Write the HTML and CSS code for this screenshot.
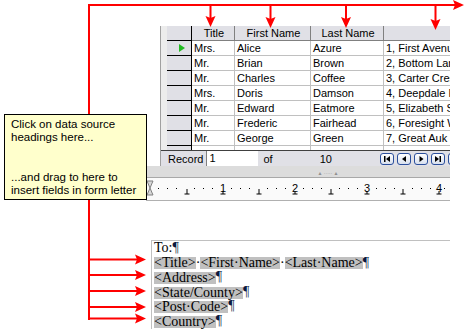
FILE: index.html
```html
<!DOCTYPE html>
<html>
<head>
  <title>Mail merge fields</title>
  <link rel="stylesheet" href="styles.css">
</head>
<body>
<div class="figure">

  <div class="app">
    <!-- Data source browser -->
    <div class="datasource">
      <div class="grid">
        <div class="row head">
          <div class="cell rowhead"></div>
          <div class="cell">Title</div>
          <div class="cell">First Name</div>
          <div class="cell">Last Name</div>
          <div class="cell"></div>
        </div>
        <div class="row">
          <div class="cell rowhead"><span class="current"></span></div>
          <div class="cell">Mrs.</div><div class="cell">Alice</div><div class="cell">Azure</div><div class="cell">1, First Avenue</div>
        </div>
        <div class="row">
          <div class="cell rowhead"></div>
          <div class="cell">Mr.</div><div class="cell">Brian</div><div class="cell">Brown</div><div class="cell">2, Bottom Lane</div>
        </div>
        <div class="row">
          <div class="cell rowhead"></div>
          <div class="cell">Mr.</div><div class="cell">Charles</div><div class="cell">Coffee</div><div class="cell">3, Carter Crescent</div>
        </div>
        <div class="row">
          <div class="cell rowhead"></div>
          <div class="cell">Mrs.</div><div class="cell">Doris</div><div class="cell">Damson</div><div class="cell">4, Deepdale Road</div>
        </div>
        <div class="row">
          <div class="cell rowhead"></div>
          <div class="cell">Mr.</div><div class="cell">Edward</div><div class="cell">Eatmore</div><div class="cell">5, Elizabeth Street</div>
        </div>
        <div class="row">
          <div class="cell rowhead"></div>
          <div class="cell">Mr.</div><div class="cell">Frederic</div><div class="cell">Fairhead</div><div class="cell">6, Foresight Way</div>
        </div>
        <div class="row">
          <div class="cell rowhead"></div>
          <div class="cell">Mr.</div><div class="cell">George</div><div class="cell">Green</div><div class="cell">7, Great Auk Lane</div>
        </div>
        <div class="row">
          <div class="cell rowhead"></div>
          <div class="cell"></div><div class="cell"></div><div class="cell"></div><div class="cell"></div>
        </div>
      </div>

      <div class="recordbar">
        <span class="label">Record</span>
        <span class="recfield">1</span>
        <span class="of">of</span>
        <span class="count">10</span>
        <div class="nav">
          <span class="navbtn"><svg width="12" height="10" viewBox="0 0 12 10"><rect x="3" y="2" width="1.5" height="6" fill="#000"/><polygon points="9,2 9,8 5,5" fill="#000"/></svg></span>
          <span class="navbtn"><svg width="12" height="10" viewBox="0 0 12 10"><polygon points="8,2 8,8 4,5" fill="#000"/></svg></span>
          <span class="navbtn"><svg width="12" height="10" viewBox="0 0 12 10"><polygon points="4.5,2 4.5,8 8.5,5" fill="#000"/></svg></span>
          <span class="navbtn"><svg width="12" height="10" viewBox="0 0 12 10"><polygon points="3,2 3,8 7,5" fill="#000"/><rect x="7.5" y="2" width="1.5" height="6" fill="#000"/></svg></span>
          <span class="navbtn"></span>
        </div>
      </div>
    </div>

    <div class="splitter"><span class="grip">&#9650; &middot;&middot;&middot;&middot;&middot; &#9650;</span></div>

    <!-- Ruler -->
    <div class="ruler">
      <svg width="304" height="22" viewBox="0 0 304 22">
        <polygon points="1,3 7,3 4,10 7,17 1,17 4,10" fill="#d8d8d8" stroke="#808080" stroke-width="1"/>
        <g fill="#000">
          <rect x="12" y="10" width="1" height="1"/><rect x="21" y="10" width="1" height="1"/><rect x="30" y="10" width="1" height="1"/>
          <rect x="48" y="10" width="1" height="1"/><rect x="57" y="10" width="1" height="1"/><rect x="66" y="10" width="1" height="1"/>
          <rect x="85" y="10" width="1" height="1"/><rect x="94" y="10" width="1" height="1"/><rect x="103" y="10" width="1" height="1"/>
          <rect x="121" y="10" width="1" height="1"/><rect x="130" y="10" width="1" height="1"/><rect x="139" y="10" width="1" height="1"/>
          <rect x="157" y="10" width="1" height="1"/><rect x="166" y="10" width="1" height="1"/><rect x="175" y="10" width="1" height="1"/>
          <rect x="193" y="10" width="1" height="1"/><rect x="202" y="10" width="1" height="1"/><rect x="211" y="10" width="1" height="1"/>
          <rect x="230" y="10" width="1" height="1"/><rect x="239" y="10" width="1" height="1"/><rect x="248" y="10" width="1" height="1"/>
          <rect x="266" y="10" width="1" height="1"/><rect x="275" y="10" width="1" height="1"/><rect x="284" y="10" width="1" height="1"/>
          <rect x="298" y="10" width="1" height="1"/>
          <path d="M41 11v5M38.5 16h5M113 11v5M110.5 16h5M185 11v5M182.5 16h5M257 11v5M254.5 16h5" stroke="#000" stroke-width="1"/>
          <path d="M77 13v3M74.5 16h5M149 13v3M146.5 16h5M221 13v3M218.5 16h5M293 13v3M290.5 16h5" stroke="#000" stroke-width="1"/>
        </g>
        <g font-family="Liberation Sans, sans-serif" font-size="11" text-anchor="middle" fill="#000">
          <text x="77" y="14">1</text>
          <text x="149" y="14">2</text>
          <text x="221" y="14">3</text>
          <text x="293" y="14">4</text>
        </g>
      </svg>
    </div>

    <!-- Document -->
    <div class="doc">
      <div class="page">
        <div class="line">To:<span class="pil">¶</span></div>
        <div class="line"><span class="field">&lt;Title&gt;</span>·<span class="field">&lt;First·Name&gt;</span>·<span class="field">&lt;Last·Name&gt;</span><span class="pil">¶</span></div>
        <div class="line"><span class="field">&lt;Address&gt;</span><span class="pil">¶</span></div>
        <div class="line"><span class="field">&lt;State/County&gt;</span><span class="pil">¶</span></div>
        <div class="line"><span class="field">&lt;Post·Code&gt;</span><span class="pil">¶</span></div>
        <div class="line"><span class="field">&lt;Country&gt;</span><span class="pil">¶</span></div>
      </div>
    </div>
  </div>

  <!-- Annotation arrows -->
  <svg class="arrows" width="465" height="331" viewBox="0 0 465 331">
    <g stroke="#ff0000" stroke-width="2" fill="none">
      <path d="M89 320V5H455"/>
      <path d="M210.5 5V18M270.5 5V19M346 5V19M435.5 5V21"/>
      <path d="M89 259.5H137M89 275H137M89 291H137M89 307H137M89 318.5H137"/>
    </g>
    <g fill="#ff0000">
      <polygon points="464,5 453,0 455,5 453,10"/>
      <polygon points="210.5,27 205.5,16 210.5,18 215.5,16"/>
      <polygon points="270.5,28 265.5,17 270.5,19 275.5,17"/>
      <polygon points="346,28 341,17 346,19 351,17"/>
      <polygon points="435.5,30 430.5,19 435.5,21 440.5,19"/>
      <polygon points="146,259.5 135,254.5 137,259.5 135,264.5"/>
      <polygon points="146,275 135,270 137,275 135,280"/>
      <polygon points="146,291 135,286 137,291 135,296"/>
      <polygon points="146,307 135,302 137,307 135,312"/>
      <polygon points="146,318.5 135,313.5 137,318.5 135,323.5"/>
    </g>
  </svg>

  <div class="callout">
    <p>Click on data source headings here...</p>
    <p>...and drag to here to insert fields in form letter</p>
  </div>

</div>
</body>
</html>
```

FILE: styles.css
```css
body {
  margin: 0;
  background: #fff;
  font-family: "Liberation Sans", Arial, sans-serif;
}
.figure {
  position: relative;
  width: 465px;
  height: 331px;
  overflow: hidden;
}
.app {
  width: 304px;
  margin-left: 146px;
  padding-top: 26px;
}

/* data source grid */
.datasource {
  margin-left: 14px;
  padding-left: 6px;
  background: #ececec;
  border-left: 1px solid #a0a0a0;
  overflow: hidden;
}
.grid {
  height: 124px;
  overflow: hidden;
}
.row {
  display: grid;
  grid-template-columns: 25px 43px 76px 73px 90px;
  height: 15px;
}
.cell {
  box-sizing: border-box;
  padding-left: 2px;
  background: #fff;
  border-right: 1px solid #c0c0c0;
  border-bottom: 1px solid #c0c0c0;
  font-size: 11px;
  line-height: 14px;
  color: #000;
  white-space: nowrap;
  overflow: hidden;
}
.head .cell {
  background: #e0e0e6;
  border-right-color: #808080;
  border-bottom-color: #808080;
  text-align: center;
}
.cell.rowhead {
  position: relative;
  background: #e0e0e6;
  border-right-color: #000;
  border-bottom-color: #000;
}
.current {
  position: absolute;
  left: 12px;
  top: 3px;
  border-left: 6px solid #22bb22;
  border-top: 4px solid transparent;
  border-bottom: 4px solid transparent;
}
.recordbar {
  display: flex;
  align-items: center;
  height: 15px;
  margin-left: -6px;
  padding-left: 7px;
  background: #e0e0e6;
  border-top: 1px solid #404040;
  font-size: 11px;
  white-space: nowrap;
}
.recordbar > * {
  flex-shrink: 0;
}
.recfield {
  box-sizing: border-box;
  width: 52px;
  height: 15px;
  margin-left: 3px;
  padding-left: 2px;
  line-height: 15px;
  background: #fff;
  border-left: 1px solid #808080;
}
.of {
  margin-left: 5px;
}
.count {
  margin-left: 47px;
}
.nav {
  display: flex;
  gap: 3px;
  margin-left: 48px;
}
.navbtn {
  box-sizing: border-box;
  display: flex;
  align-items: center;
  justify-content: center;
  width: 14px;
  height: 12px;
  border: 1px solid #2b4f9c;
  border-radius: 3px;
  background: linear-gradient(#ffffff, #d8e0ee);
  flex-shrink: 0;
}

/* splitter and ruler */
.splitter {
  height: 11px;
  background: #dcdcdc;
  border-bottom: 1px solid #a8a8a8;
  text-align: center;
  font-size: 5px;
  line-height: 14px;
  color: #909090;
  padding-left: 60px;
}
.ruler {
  height: 22px;
  background: #fafafa;
  border-bottom: 1px solid #b0b0b0;
}
.ruler svg {
  display: block;
}

/* document */
.doc {
  padding-top: 39px;
  padding-left: 5px;
}
.page {
  padding: 0 0 0 2px;
  border-top: 1px solid #c0c0c0;
  border-left: 1px solid #c0c0c0;
  font-family: "Liberation Serif", "Times New Roman", serif;
  font-size: 14px;
  color: #000;
}
.line {
  height: 14.6px;
  line-height: 14.6px;
  white-space: nowrap;
}
.field {
  display: inline-block;
  height: 12px;
  line-height: 12px;
  background: #c0c0c0;
  vertical-align: middle;
}
.pil {
  color: #0a1a40;
}

/* annotations */
.arrows {
  position: absolute;
  left: 0;
  top: 0;
}
.callout {
  position: absolute;
  left: 4px;
  top: 114px;
  box-sizing: border-box;
  width: 143px;
  height: 86px;
  padding: 3px 2px 2px 6px;
  display: flex;
  flex-direction: column;
  justify-content: space-between;
  background: #ffffcc;
  border: 1px solid #000;
  font-size: 11.5px;
  line-height: 13px;
  color: #000;
}
.callout p {
  margin: 0;
}
```
